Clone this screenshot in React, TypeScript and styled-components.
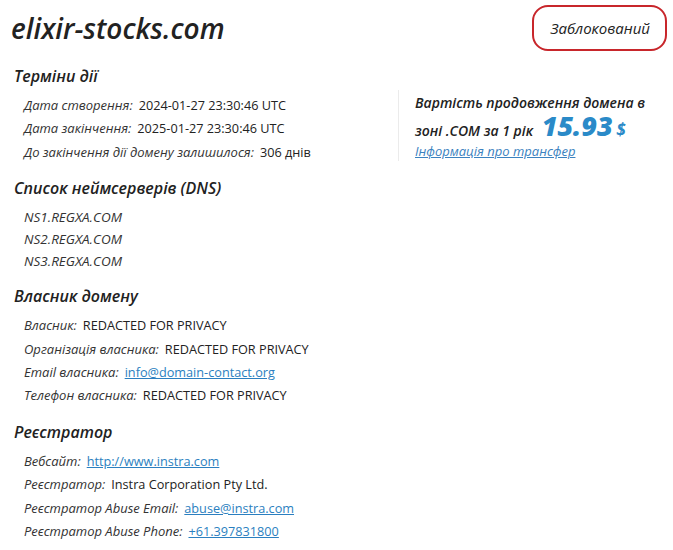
import React from 'react'
import styled, { createGlobalStyle } from 'styled-components'

const GlobalStyle = createGlobalStyle`
  body {
    margin: 0;
    background: #fff;
    font-family: 'Open Sans', 'DejaVu Sans', sans-serif;
    color: #222;
  }
`

type Row = { label: string; value: string; href?: string }

const terms: Row[] = [
  { label: 'Дата створення:', value: '2024-01-27 23:30:46 UTC' },
  { label: 'Дата закінчення:', value: '2025-01-27 23:30:46 UTC' },
  { label: 'До закінчення дії домену залишилося:', value: '306 днів' },
]

const nameServers = ['NS1.REGXA.COM', 'NS2.REGXA.COM', 'NS3.REGXA.COM']

const owner: Row[] = [
  { label: 'Власник:', value: 'REDACTED FOR PRIVACY' },
  { label: 'Організація власника:', value: 'REDACTED FOR PRIVACY' },
  { label: 'Email власника:', value: 'info@domain-contact.org', href: '#' },
  { label: 'Телефон власника:', value: 'REDACTED FOR PRIVACY' },
]

const registrar: Row[] = [
  { label: 'Вебсайт:', value: 'http://www.instra.com', href: '#' },
  { label: 'Реєстратор:', value: 'Instra Corporation Pty Ltd.' },
  { label: 'Реєстратор Abuse Email:', value: 'abuse@instra.com', href: '#' },
  { label: 'Реєстратор Abuse Phone:', value: '+61.397831800', href: '#' },
]

const InfoRows = ({ rows }: { rows: Row[] }) => (
  <List>
    {rows.map((r) => (
      <Line key={r.label}>
        <Label>{r.label}</Label>
        {r.href ? <ValueLink href={r.href}>{r.value}</ValueLink> : <Value>{r.value}</Value>}
      </Line>
    ))}
  </List>
)

export default function App() {
  return (
    <Page>
      <GlobalStyle />
      <Header>
        <Domain>elixir-stocks.com</Domain>
        <Badge>Заблокований</Badge>
      </Header>
      <Body>
        <Main>
          <Section>
            <Heading>Терміни дії</Heading>
            <InfoRows rows={terms} />
          </Section>
          <Section>
            <Heading>Список неймсерверів (DNS)</Heading>
            <List $tight>
              {nameServers.map((ns) => (
                <Line key={ns} $tight>
                  <NsName>{ns}</NsName>
                </Line>
              ))}
            </List>
          </Section>
          <Section>
            <Heading>Власник домену</Heading>
            <InfoRows rows={owner} />
          </Section>
          <Section>
            <Heading>Реєстратор</Heading>
            <InfoRows rows={registrar} />
          </Section>
        </Main>
        <Aside>
          <PriceText>Вартість продовження домена в</PriceText>
          <PriceText>
            зоні .COM за 1 рік <Price>15.93</Price> <Currency>$</Currency>
          </PriceText>
          <TransferLink href='#'>Інформація про трансфер</TransferLink>
        </Aside>
      </Body>
    </Page>
  )
}

const Page = styled.div`
  width: 673px;
  padding: 0 6px 0 11px;
  box-sizing: border-box;
`

const Header = styled.div`
  display: flex;
  justify-content: space-between;
  align-items: center;
  height: 56px;
`

const Domain = styled.h1`
  margin: 0;
  font-size: 28px;
  font-style: italic;
  font-weight: 600;
  color: #222;
`

const Badge = styled.div`
  border: 2.5px solid #c8262b;
  border-radius: 16px;
  padding: 0 15px 0 16px;
  height: 42px;
  display: flex;
  align-items: center;
  font-size: 15px;
  font-style: italic;
  color: #222;
`

const Body = styled.div`
  display: flex;
  padding-top: 8px;
`

const Main = styled.div`
  width: 387px;
`

const Section = styled.section`
  & + & {
    margin-top: 12px;
  }
`

const Heading = styled.h2`
  margin: 0 0 0 3px;
  font-size: 16px;
  line-height: 24px;
  font-style: italic;
  font-weight: 600;
  color: #222;
`

const List = styled.div<{ $tight?: boolean }>`
  padding: 6px 0 0 13px;
  font-size: 13px;
`

const Line = styled.div<{ $tight?: boolean }>`
  display: flex;
  align-items: baseline;
  height: ${(p) => (p.$tight ? '22px' : '23.4px')};
  line-height: ${(p) => (p.$tight ? '22px' : '23.4px')};
  white-space: nowrap;
`

const Label = styled.span`
  font-style: italic;
  color: #333;
  margin-right: 6px;
`

const NsName = styled.span`
  font-style: italic;
  font-size: 13.5px;
  color: #333;
`

const Value = styled.span`
  font-size: 12.7px;
  color: #222;
`

const ValueLink = styled.a`
  font-size: 12.7px;
  color: #2b7fc0;
  text-decoration: underline;
`

const Aside = styled.div`
  margin-top: 26px;
  align-self: flex-start;
  border-left: 1px solid #ebebeb;
  padding-left: 16px;
  font-style: italic;
`

const PriceText = styled.div`
  font-size: 14px;
  font-weight: 600;
  line-height: 25px;
  height: 25px;
  color: #222;
  white-space: nowrap;
`

const Price = styled.span`
  display: inline-block;
  font-size: 27px;
  line-height: 22px;
  height: 22px;
  font-weight: 800;
  color: #2a8ac8;
  margin-left: 5px;
`

const Currency = styled.span`
  font-size: 17px;
  line-height: 20px;
  font-weight: 700;
  color: #2a8ac8;
`

const TransferLink = styled.a`
  display: block;
  margin-top: 1px;
  font-size: 13px;
  line-height: 20px;
  color: #3b82c0;
  text-decoration: underline;
`
